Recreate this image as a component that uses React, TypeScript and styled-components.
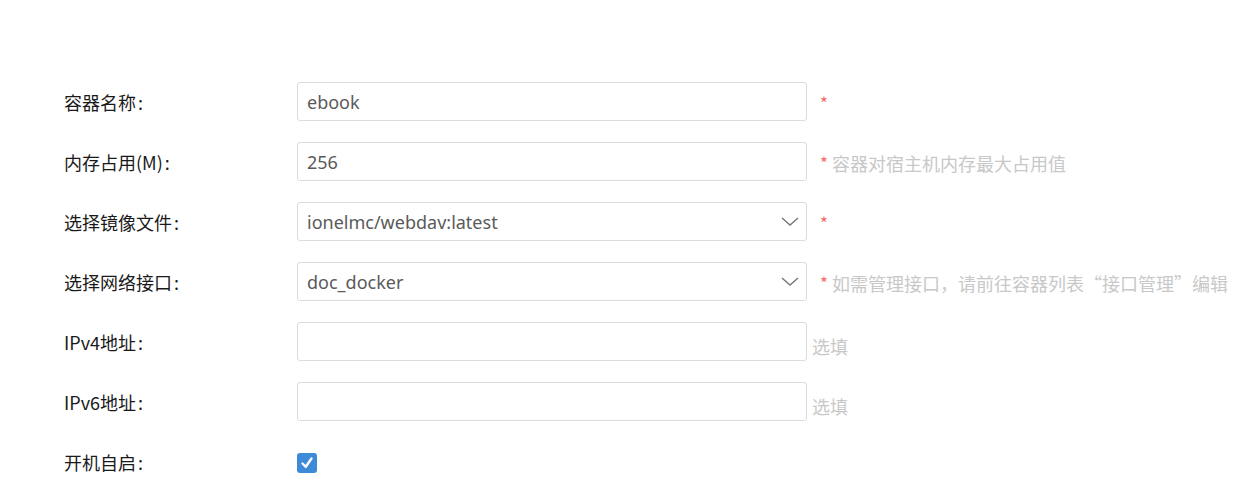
import React from "react";
import styled, { createGlobalStyle } from "styled-components";

const Global = createGlobalStyle`
  html, body { margin: 0; padding: 0; background: #fff; }
  body { font-family: "Noto Sans CJK SC", "Noto Sans", sans-serif; }
`;

const Form = styled.div`
  padding: 82px 0 0 64px;
  display: flex;
  flex-direction: column;
  gap: 21px;
`;

const Row = styled.div`
  display: flex;
  align-items: center;
  height: 39px;
`;

const Label = styled.div`
  width: 233px;
  font-size: 18px;
  color: #1a1a1a;
  white-space: nowrap;
`;

const Colon = styled.span`
  margin-left: 2px;
`;

const Field = styled.div`
  position: relative;
  width: 510px;
  height: 39px;
  box-sizing: border-box;
  border: 1px solid #dcdcdc;
  border-radius: 3px;
  display: flex;
  align-items: center;
  padding: 0 9px;
  font-size: 18px;
  color: #5a5a5a;
  font-family: "Noto Sans", "Noto Sans CJK SC", sans-serif;
`;

const Chevron = styled.svg`
  position: absolute;
  right: 6px;
  top: 12px;
`;

const Hint = styled.div<{ $pad?: number; $drop?: number }>`
  margin-left: ${(p) => p.$pad ?? 13}px;
  margin-top: ${(p) => p.$drop ?? 2}px;
  font-size: 18px;
  color: #c8c8c8;
  white-space: nowrap;
  display: flex;
  align-items: center;
`;

const Star = styled.span`
  color: #f56c6c;
  font-size: 17px;
  margin-right: 4px;
`;

const Check = styled.div`
  width: 20px;
  height: 20px;
  margin-top: 2px;
  border-radius: 3px;
  background: #3d8ad8;
  display: flex;
  align-items: center;
  justify-content: center;
`;

const Down = () => (
  <Chevron width="20" height="14" viewBox="0 0 20 14">
    <path d="M2 3 L10 10 L18 3" fill="none" stroke="#777" strokeWidth="1.4" />
  </Chevron>
);

const L = ({ t }: { t: string }) => (
  <Label>
    {t}
    <Colon>:</Colon>
  </Label>
);

export default function App() {
  return (
    <>
      <Global />
      <Form>
        <Row>
          <L t="容器名称" />
          <Field>ebook</Field>
          <Hint><Star>*</Star></Hint>
        </Row>
        <Row>
          <L t="内存占用(M)" />
          <Field>256</Field>
          <Hint><Star>*</Star>容器对宿主机内存最大占用值</Hint>
        </Row>
        <Row>
          <L t="选择镜像文件" />
          <Field>ionelmc/webdav:latest<Down /></Field>
          <Hint><Star>*</Star></Hint>
        </Row>
        <Row>
          <L t="选择网络接口" />
          <Field>doc_docker<Down /></Field>
          <Hint><Star>*</Star>如需管理接口，请前往容器列表“接口管理”编辑</Hint>
        </Row>
        <Row>
          <L t="IPv4地址" />
          <Field />
          <Hint $pad={5} $drop={8}>选填</Hint>
        </Row>
        <Row>
          <L t="IPv6地址" />
          <Field />
          <Hint $pad={5} $drop={8}>选填</Hint>
        </Row>
        <Row>
          <L t="开机自启" />
          <Check>
            <svg width="14" height="14" viewBox="0 0 14 14">
              <path d="M2.5 7.5 L5.8 10.8 L11.5 2.5" fill="none" stroke="#fff" strokeWidth="2.4" strokeLinecap="round" strokeLinejoin="round" />
            </svg>
          </Check>
        </Row>
      </Form>
    </>
  );
}
